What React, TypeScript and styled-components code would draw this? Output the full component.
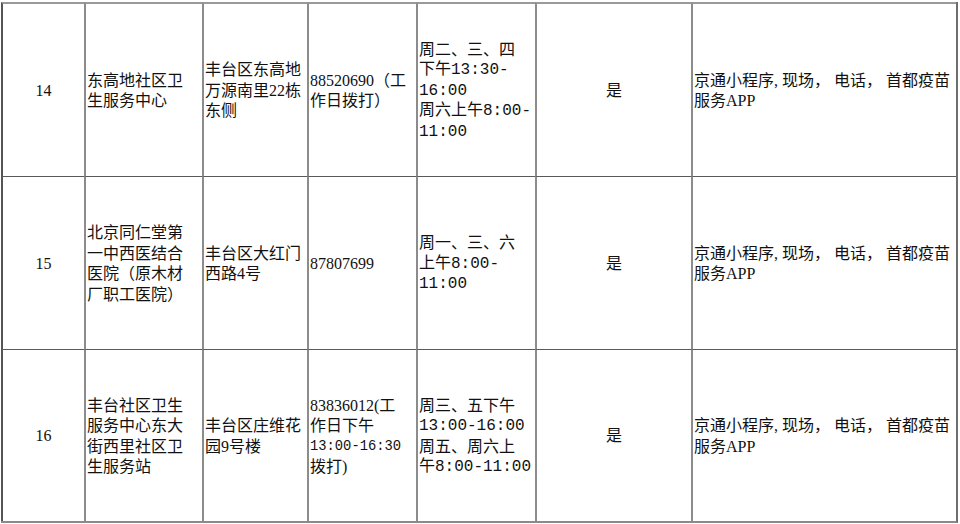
import React from 'react';
import styled, { createGlobalStyle } from 'styled-components';

type Line = { text: string; mono?: boolean; small?: boolean };
type CellData = { lines: Line[]; center?: boolean };

const l = (text: string, mono = false, small = false): Line => ({ text, mono, small });

const ways = [l('京通小程序, 现场， 电话， 首都疫苗'), l('服务APP')];

const rows: CellData[][] = [
  [
    { lines: [l('14')], center: true },
    { lines: [l('东高地社区卫'), l('生服务中心')] },
    { lines: [l('丰台区东高地'), l('万源南里22栋'), l('东侧')] },
    { lines: [l('88520690（工'), l('作日拨打）')] },
    {
      lines: [l('周二、三、四'), l('下午13:30-', true), l('16:00', true), l('周六上午8:00-', true), l('11:00', true)],
    },
    { lines: [l('是')], center: true },
    { lines: ways },
  ],
  [
    { lines: [l('15')], center: true },
    { lines: [l('北京同仁堂第'), l('一中西医结合'), l('医院（原木材'), l('厂职工医院）')] },
    { lines: [l('丰台区大红门'), l('西路4号')] },
    { lines: [l('87807699')] },
    { lines: [l('周一、三、六'), l('上午8:00-', true), l('11:00', true)] },
    { lines: [l('是')], center: true },
    { lines: ways },
  ],
  [
    { lines: [l('16')], center: true },
    { lines: [l('丰台社区卫生'), l('服务中心东大'), l('街西里社区卫'), l('生服务站')] },
    { lines: [l('丰台区庄维花'), l('园9号楼')] },
    { lines: [l('83836012(工'), l('作日下午'), l('13:00-16:30', true, true), l('拨打)')] },
    { lines: [l('周三、五下午'), l('13:00-16:00', true), l('周五、周六上'), l('午8:00-11:00', true)] },
    { lines: [l('是')], center: true },
    { lines: ways },
  ],
];

const rowHeights = [174, 173, 172];

export default function App() {
  return (
    <>
      <GlobalStyle />
      <STable>
        {rows.map((row, ri) =>
          row.map((cell, ci) => (
            <SCell key={`${ri}-${ci}`} $center={cell.center} style={{ height: rowHeights[ri] }}>
              <SText>
                {cell.lines.map((line, li) => (
                  <SLine key={li} $mono={line.mono} $small={line.small}>
                    {line.text}
                  </SLine>
                ))}
              </SText>
            </SCell>
          ))
        )}
      </STable>
    </>
  );
}

const GlobalStyle = createGlobalStyle`
  html, body {
    margin: 0;
    padding: 0;
    background: #fff;
  }
  body {
    font-family: "Liberation Serif", "Noto Sans CJK SC", serif;
    color: #111;
  }
`;

const STable = styled.div`
  display: grid;
  grid-template-columns: 83px 118px 105px 109px 119px 156px 265px;
  margin: 2px 0 0 1px;
  width: fit-content;
  border-right: 2px solid #6e6e6e;
  border-bottom: 2px solid #8a8a8a;
  box-sizing: border-box;
`;

const SCell = styled.div<{ $center?: boolean }>`
  box-sizing: border-box;
  display: flex;
  align-items: center;
  justify-content: ${(p) => (p.$center ? 'center' : 'flex-start')};
  padding: ${(p) => (p.$center ? '0' : '0 1px 0 1px')};
  border-left: 2px solid #8c8c8c;
  border-top: 1px solid #5a5a5a;
  &:nth-child(-n + 7) {
    border-top: 2px solid #9a9a9a;
  }
  &:nth-child(7n + 1) {
    border-left-color: #555;
  }
`;

const SText = styled.div`
  font-size: 16px;
  line-height: 20.5px;
  white-space: nowrap;
  padding-top: 2px;
`;

const SLine = styled.div<{ $mono?: boolean; $small?: boolean }>`
  font-family: ${(p) =>
    p.$mono
      ? '"Liberation Mono", "Noto Sans CJK SC", monospace'
      : '"Liberation Serif", "Noto Sans CJK SC", serif'};
  font-size: ${(p) => (p.$small ? '13.8px' : '16px')};
`;
